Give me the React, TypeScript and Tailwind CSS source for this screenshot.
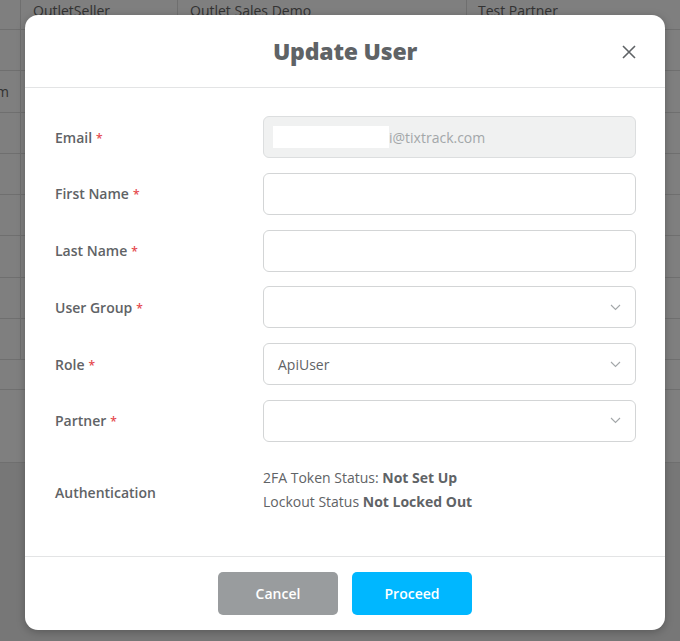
import React from "react";

const font = { fontFamily: '"Open Sans", "Noto Sans", Arial, sans-serif' };

function Chevron() {
  return (
    <svg width="11" height="7" viewBox="0 0 11 7" fill="none" className="shrink-0">
      <path d="M1 1l4.5 4.5L10 1" stroke="#a3a7a9" strokeWidth="1.1" />
    </svg>
  );
}

function Label({ text, required = true }: { text: string; required?: boolean }) {
  return (
    <div className="w-[208px] shrink-0 text-[14px] font-semibold text-[#5f6366]">
      {text}
      {required && <span className="ml-[4px] text-[#e5484d] text-[12px]">*</span>}
    </div>
  );
}

function Row({ label, children }: { label: string; children?: React.ReactNode }) {
  return (
    <div className="flex items-center">
      <Label text={label} />
      {children}
    </div>
  );
}

const boxCls =
  "flex h-[42px] flex-1 items-center rounded-[6px] border border-[#d3d5d6] bg-white px-[14px] text-[14px] text-[#5f6366]";

export default function App() {
  const rows = [
    ["OutletSeller", "Outlet Sales Demo", "Test Partner", ""],
    ["", "", "", ""],
    ["m", "", "", ""],
    ["", "", "", ""],
    ["", "", "", ""],
    ["", "", "", ""],
    ["", "", "", ""],
    ["", "", "", ""],
    ["", "", "", ""],
  ];
  return (
    <div className="relative h-[641px] w-[680px] overflow-hidden bg-[#eeeeee]" style={font}>
      {/* background page */}
      <div className="bg-white text-[14px] text-[#666]">
        {rows.map((r, i) => (
          <div
            key={i}
            className={`flex border-b border-[#dedede] ${i === 0 ? "h-[30px] items-end" : "h-[41.25px] items-center"}`}
          >
            <div className="flex h-full w-[21px] items-center border-r border-[#dedede] overflow-hidden whitespace-nowrap">
              <span className="-ml-[4px]">{r[0] === "m" ? "m" : ""}</span>
            </div>
            <div className={`flex h-full w-[157px] border-r border-[#dedede] pl-[12px] ${i === 0 ? "items-start -mt-[4px]" : "items-center"}`}>
              {r[0] !== "m" ? r[0] : ""}
            </div>
            <div className={`flex h-full w-[289px] border-r border-[#dedede] pl-[12px] ${i === 0 ? "items-start -mt-[4px]" : "items-center"}`}>
              {r[1]}
            </div>
            <div className={`flex h-full flex-1 pl-[11px] ${i === 0 ? "items-start -mt-[4px]" : "items-center"}`}>{r[2]}</div>
          </div>
        ))}
        <div className="h-[30px] border-b border-[#dedede]" />
        <div className="h-[73px] border-b border-[#dedede]" />
      </div>

      {/* overlay */}
      <div className="absolute inset-0 bg-black/50 pl-[25px] pt-[15px]">
        <div className="flex h-[615px] w-[640px] flex-col rounded-[13px] bg-white shadow-[0_2px_8px_rgba(0,0,0,0.25)]">
          {/* header */}
          <div className="relative flex h-[73px] shrink-0 items-center justify-center border-b border-[#e3e4e5]">
            <div className="text-[23px] font-extrabold text-[#5f6366] tracking-[-0.2px]">Update User</div>
            <svg className="absolute right-[29px] top-[30px]" width="14" height="14" viewBox="0 0 14 14">
              <path d="M1 1l12 12M13 1L1 13" stroke="#5f6366" strokeWidth="1.6" />
            </svg>
          </div>

          {/* body */}
          <div className="flex flex-1 flex-col gap-[14.8px] border-b border-[#e3e4e5] pl-[30px] pr-[29px] pt-[28px]">
            <Row label="Email">
              <div className="flex h-[42px] flex-1 items-center rounded-[6px] border border-[#dcdedf] bg-[#f0f1f1] pl-[9px] text-[14px] text-[#a3a7a9]">
                <span className="inline-block h-[22px] w-[116px] bg-white" />
                <span>i@tixtrack.com</span>
              </div>
            </Row>
            <Row label="First Name">
              <div className={boxCls} />
            </Row>
            <Row label="Last Name">
              <div className={boxCls} />
            </Row>
            <Row label="User Group">
              <div className={`${boxCls} justify-end`}>
                <Chevron />
              </div>
            </Row>
            <Row label="Role">
              <div className={`${boxCls} justify-between`}>
                <span>ApiUser</span>
                <Chevron />
              </div>
            </Row>
            <Row label="Partner">
              <div className={`${boxCls} justify-end`}>
                <Chevron />
              </div>
            </Row>
            <div className="mt-[9px] flex items-center">
              <div className="mt-[6px] w-[208px] shrink-0 text-[14px] font-semibold text-[#5f6366]">Authentication</div>
              <div className="text-[14px] leading-[24px] text-[#5f6366]">
                <div>
                  2FA Token Status: <span className="font-bold">Not Set Up</span>
                </div>
                <div>
                  Lockout Status <span className="font-bold">Not Locked Out</span>
                </div>
              </div>
            </div>
          </div>

          {/* footer */}
          <div className="flex h-[73px] shrink-0 items-center justify-center gap-[14px]">
            <button className="h-[43px] w-[120px] rounded-[5px] bg-[#999c9e] text-[14px] font-semibold text-white">
              Cancel
            </button>
            <button className="h-[43px] w-[120px] rounded-[5px] bg-[#00b7ff] text-[14px] font-semibold text-white">
              Proceed
            </button>
          </div>
        </div>
      </div>
    </div>
  );
}
